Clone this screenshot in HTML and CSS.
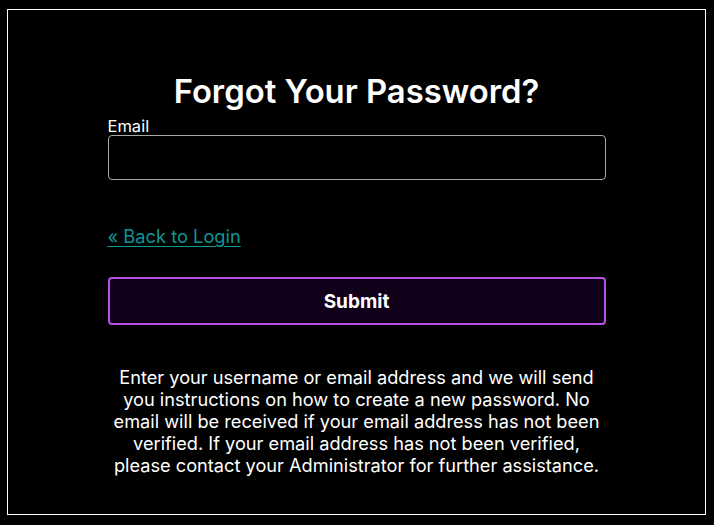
FILE: index.html
```html
<!DOCTYPE html>
<html>
<head>
<meta charset="utf-8">
<link rel="stylesheet" href="styles.css">
</head>
<body>
<div class="frame">
  <form class="card">
    <h1 class="title">Forgot Your Password?</h1>
    <label class="label" for="email">Email</label>
    <input class="input" id="email" type="text">
    <a class="back" href="#">« Back to Login</a>
    <button class="submit" type="button">Submit</button>
    <p class="note">Enter your username or email address and we will send you instructions on how to create a new password. No email will be received if your email address has not been verified. If your email address has not been verified, please contact your Administrator for further assistance.</p>
  </form>
</div>
</body>
</html>
```
FILE: styles.css
```css
html, body {
  margin: 0;
  background: #000;
}
body {
  padding: 9px 8px 9px 7px;
  font-family: Inter, "Liberation Sans", sans-serif;
  color: #fff;
}
.frame {
  border: 1px solid #fff;
  height: 506px;
  box-sizing: border-box;
  display: flex;
  justify-content: center;
}
.card {
  width: 498px;
  display: flex;
  flex-direction: column;
  padding-top: 61px;
}
.title {
  margin: 0;
  font-size: 32.8px;
  font-weight: 600;
  text-align: center;
  line-height: 40px;
}
.label {
  font-size: 16.5px;
  line-height: 18px;
  margin-top: 6px;
}
.input {
  height: 45px;
  box-sizing: border-box;
  border: 1px solid #a8a8a8;
  border-radius: 4px;
  background: #000;
  margin: 0;
}
.back {
  margin-top: 45px;
  align-self: flex-start;
  color: #0f9595;
  font-size: 18.3px;
  line-height: 22px;
  text-decoration: underline;
  text-underline-offset: 3px;
}
.submit {
  margin-top: 30px;
  height: 48px;
  border: 2px solid #b64fe4;
  border-radius: 4px;
  background: #11001a;
  color: #fff;
  font-family: inherit;
  font-size: 19px;
  font-weight: 700;
}
.note {
  margin: 41px 0 0;
  text-align: center;
  font-size: 18.2px;
  line-height: 22px;
  padding: 0 2px;
}
```
